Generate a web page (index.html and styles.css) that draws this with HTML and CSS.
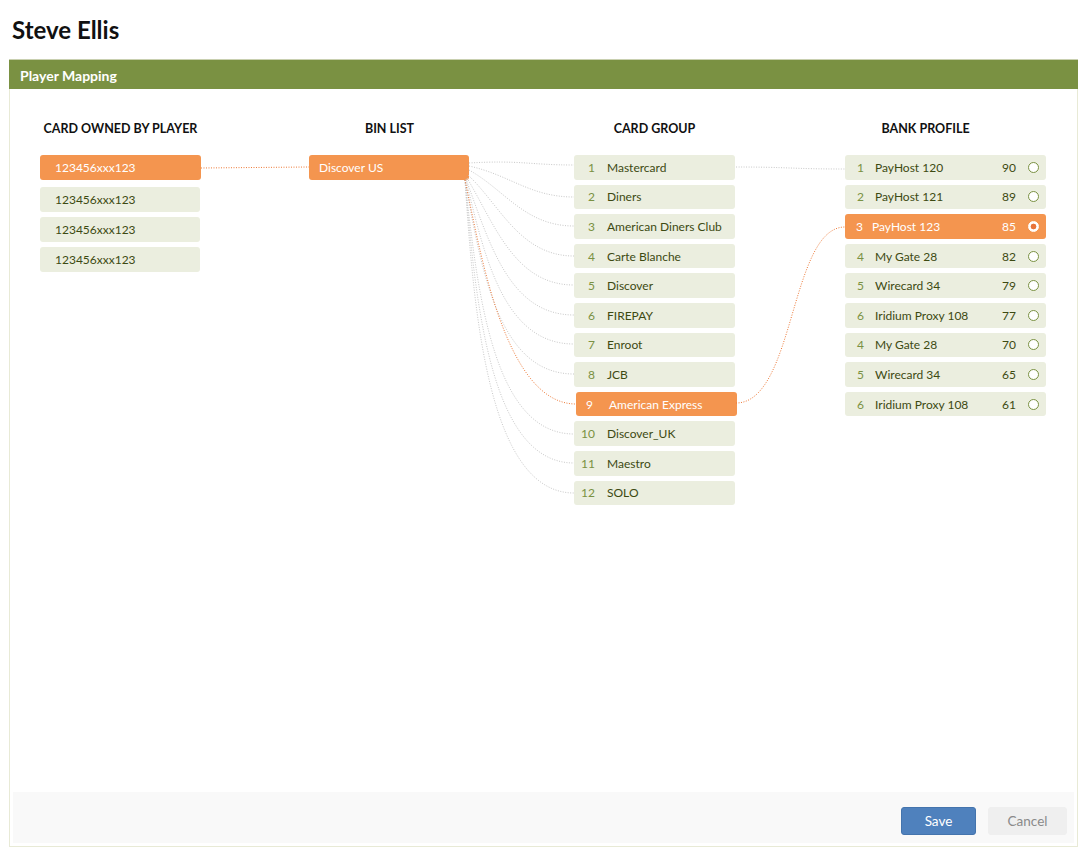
FILE: index.html
```html
<!DOCTYPE html>
<html lang="en">
<head>
<meta charset="utf-8">
<title>Player Mapping</title>
<link rel="stylesheet" href="styles.css">
</head>
<body>
<h1 class="page-title">Steve Ellis</h1>
<section class="panel">
  <header class="panel-head">Player Mapping</header>
  <div class="panel-body">
    <div class="columns">
      <div class="col col-card">
        <h2 class="col-title">CARD OWNED BY PLAYER</h2>
        <ul class="list">
          <li class="item sel first">123456xxx123</li>
          <li class="item">123456xxx123</li>
          <li class="item">123456xxx123</li>
          <li class="item">123456xxx123</li>
        </ul>
      </div>
      <div class="col col-bin">
        <h2 class="col-title">BIN LIST</h2>
        <ul class="list">
          <li class="item sel">Discover US</li>
        </ul>
      </div>
      <div class="col col-group">
        <h2 class="col-title">CARD GROUP</h2>
        <ul class="list">
          <li class="item"><span class="num">1</span><span class="name">Mastercard</span></li>
          <li class="item"><span class="num">2</span><span class="name">Diners</span></li>
          <li class="item"><span class="num">3</span><span class="name">American Diners Club</span></li>
          <li class="item"><span class="num">4</span><span class="name">Carte Blanche</span></li>
          <li class="item"><span class="num">5</span><span class="name">Discover</span></li>
          <li class="item"><span class="num">6</span><span class="name">FIREPAY</span></li>
          <li class="item"><span class="num">7</span><span class="name">Enroot</span></li>
          <li class="item"><span class="num">8</span><span class="name">JCB</span></li>
          <li class="item sel"><span class="num">9</span><span class="name">American Express</span></li>
          <li class="item"><span class="num">10</span><span class="name">Discover_UK</span></li>
          <li class="item"><span class="num">11</span><span class="name">Maestro</span></li>
          <li class="item"><span class="num">12</span><span class="name">SOLO</span></li>
        </ul>
      </div>
      <div class="col col-bank">
        <h2 class="col-title">BANK PROFILE</h2>
        <ul class="list">
          <li class="item"><span class="num">1</span><span class="name">PayHost 120</span><span class="score">90</span><span class="radio"></span></li>
          <li class="item"><span class="num">2</span><span class="name">PayHost 121</span><span class="score">89</span><span class="radio"></span></li>
          <li class="item sel"><span class="num">3</span><span class="name">PayHost 123</span><span class="score">85</span><span class="radio on"></span></li>
          <li class="item"><span class="num">4</span><span class="name">My Gate 28</span><span class="score">82</span><span class="radio"></span></li>
          <li class="item"><span class="num">5</span><span class="name">Wirecard 34</span><span class="score">79</span><span class="radio"></span></li>
          <li class="item"><span class="num">6</span><span class="name">Iridium Proxy 108</span><span class="score">77</span><span class="radio"></span></li>
          <li class="item"><span class="num">4</span><span class="name">My Gate 28</span><span class="score">70</span><span class="radio"></span></li>
          <li class="item"><span class="num">5</span><span class="name">Wirecard 34</span><span class="score">65</span><span class="radio"></span></li>
          <li class="item"><span class="num">6</span><span class="name">Iridium Proxy 108</span><span class="score">61</span><span class="radio"></span></li>
        </ul>
      </div>
    </div>
    <footer class="panel-foot">
      <button class="btn btn-save" type="button">Save</button>
      <button class="btn btn-cancel" type="button">Cancel</button>
    </footer>
  </div>
</section>
<svg class="links" width="1088" height="855" viewBox="0 0 1088 855" aria-hidden="true">
  <g class="link-grey">
    <path d="M469,163 C520,160 530,165 574,165"/>
    <path d="M469,166 C510,175 530,197 574,197"/>
    <path d="M469,170 C505,190 525,226 574,226"/>
    <path d="M468,175 C500,205 520,256 574,256"/>
    <path d="M467,178 C495,225 515,285 574,285"/>
    <path d="M466,179 C490,245 510,315 574,315"/>
    <path d="M466,180 C485,260 505,344 574,344"/>
    <path d="M465,180 C482,275 500,374 574,374"/>
    <path d="M465,180 C478,300 495,434 574,434"/>
    <path d="M465,180 C476,310 492,463 574,463"/>
    <path d="M465,180 C474,320 490,493 574,493"/>
    <path d="M736,167 C790,167 790,169 845,169"/>
  </g>
  <g class="link-orange">
    <path d="M201,168 L309,167"/>
    <path d="M465,180 C480,250 505,404 576,404"/>
    <path d="M736,403 C795,403 790,227 845,227"/>
  </g>
</svg>
</body>
</html>
```

FILE: styles.css
```css
* { box-sizing: border-box; }

html, body {
  margin: 0;
  padding: 0;
  background: #ffffff;
}

body {
  position: relative;
  width: 1088px;
  height: 855px;
  font-family: Lato, "Open Sans", "Liberation Sans", sans-serif;
  color: #3d4a12;
  overflow: hidden;
}

.page-title {
  margin: 0;
  padding: 15px 12px 0;
  font-size: 24px;
  line-height: 30px;
  font-weight: 700;
  color: #111111;
}

.panel {
  margin: 14px 0 0 9px;
  width: 1069px;
  height: 788px;
  border: 1px solid #e8ead6;
  border-top: none;
  display: flex;
  flex-direction: column;
}

.panel-head {
  height: 30px;
  margin: 0 -1px;
  padding: 0 11px;
  background: #7a9142;
  color: #ffffff;
  font-size: 14px;
  font-weight: 700;
  line-height: 31px;
  border-top: 1px solid #c9d0b0;
}

.panel-body {
  flex: 1;
  display: flex;
  flex-direction: column;
}

.columns {
  flex: 1;
  display: grid;
  grid-template-columns: 269px 265px 271px 201px;
  align-items: start;
  padding: 32px 0 0 30px;
}

.col-title {
  margin: 0 0 18px;
  width: 161px;
  text-align: center;
  font-size: 12.5px;
  line-height: 16px;
  font-weight: 700;
  color: #111111;
  white-space: nowrap;
}

.list {
  list-style: none;
  margin: 0;
  padding: 0;
  display: flex;
  flex-direction: column;
  gap: 5px;
}

.item {
  height: 24.6px;
  display: flex;
  align-items: center;
  background: #ebeedf;
  border-radius: 3px;
  font-size: 12px;
  color: #3d4a12;
  white-space: nowrap;
}

.item.sel {
  background: #f4954f;
  color: #ffffff;
}

.col-card .list { gap: 5.5px; }
.col-card .item { width: 160px; padding-left: 15px; }
.col-card .item.first { width: 161px; height: 25px; margin-bottom: 1.5px; }

.col-bin .item { width: 160px; height: 25px; padding-left: 10px; }

.col-group .item { width: 161px; }
.col-group .num {
  width: 21px;
  text-align: right;
  margin-right: 12px;
  color: #7a9142;
}
.col-group .item.sel { margin-left: 2px; }
.col-group .item.sel .num { width: 17px; margin-right: 16px; color: #ffffff; }

.col-bank .item { width: 201px; padding-left: 12px; padding-right: 7px; }
.col-bank .num { width: 18px; color: #7a9142; }
.col-bank .name { flex: 1; }
.col-bank .score { margin-right: 12px; }
.col-bank .item.sel { padding-left: 11px; }
.col-bank .item.sel .num { width: 16px; color: #ffffff; }

.radio {
  width: 11px;
  height: 11px;
  border-radius: 50%;
  border: 1px solid #7a9142;
  background: #ffffff;
}
.radio.on {
  border-color: #ffffff;
  background: radial-gradient(circle, #e8743a 0 2.6px, #ffffff 3.2px);
}

.panel-foot {
  height: 51px;
  margin: 0 3px 3px;
  background: #f9f9f9;
  display: flex;
  justify-content: flex-end;
  align-items: flex-start;
  gap: 12px;
  padding: 15px 7px 0 0;
}

.btn {
  height: 28px;
  border-radius: 3px;
  font-family: inherit;
  font-size: 13.5px;
  cursor: pointer;
}
.btn-save {
  width: 75px;
  background: #4f81bd;
  border: 1px solid #4474ad;
  color: #ffffff;
}
.btn-cancel {
  width: 79px;
  background: #efefef;
  border: 1px solid #efefef;
  color: #8a8a8a;
}

.links {
  position: absolute;
  left: 0;
  top: 0;
  pointer-events: none;
  z-index: 2;
}
.links path {
  fill: none;
  stroke-width: 1;
  stroke-dasharray: 1 1.5;
}
.link-grey path { stroke: #c8c8c8; }
.link-orange path { stroke: #ee7a38; }
```
